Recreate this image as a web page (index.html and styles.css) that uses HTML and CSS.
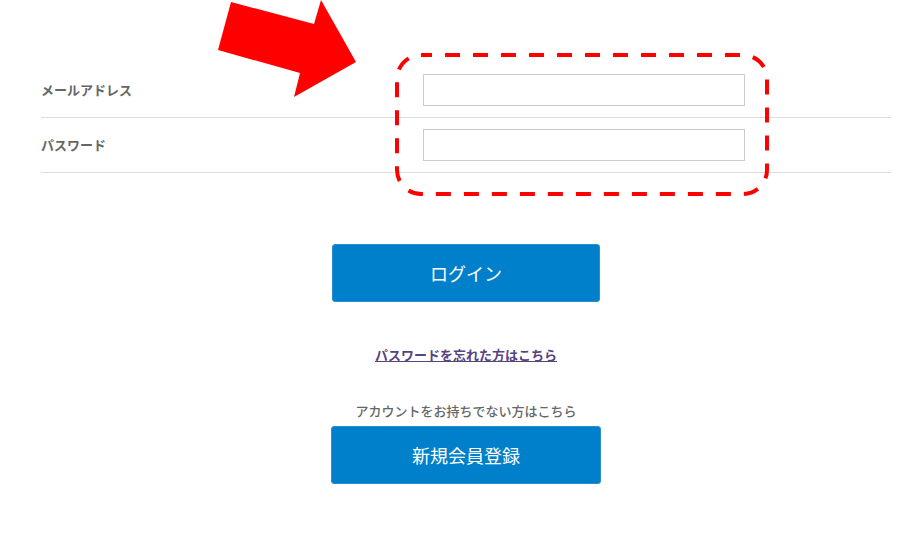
FILE: index.html
```html
<!DOCTYPE html>
<html lang="ja">
<head>
<meta charset="utf-8">
<link rel="stylesheet" href="styles.css">
</head>
<body>
<div class="page">
  <form class="login">
    <div class="rows">
      <div class="row">
        <label class="label">メールアドレス</label>
        <input class="field" type="text">
      </div>
      <div class="row">
        <label class="label">パスワード</label>
        <input class="field" type="password">
      </div>
    </div>
    <div class="actions">
      <button type="button" class="btn btn-login">ログイン</button>
      <a class="forgot" href="#">パスワードを忘れた方はこちら</a>
      <p class="note">アカウントをお持ちでない方はこちら</p>
      <button type="button" class="btn btn-register">新規会員登録</button>
    </div>
  </form>

  <svg class="arrow" width="140" height="100" viewBox="0 0 140 100">
    <polygon points="13,2 96,24 103,0 138,62 76,97 82,73 0,50" fill="#ff0000"/>
  </svg>
  <svg class="highlight" width="376" height="146" viewBox="0 0 376 146">
    <rect x="2" y="2" width="370" height="139" rx="24" ry="24" fill="none" stroke="#ff0000" stroke-width="4" stroke-dasharray="15 13" stroke-dashoffset="4"/>
  </svg>
</div>
</body>
</html>
```

FILE: styles.css
```css
* { box-sizing: border-box; }
html, body {
  margin: 0;
  padding: 0;
  background: #ffffff;
}
body {
  font-family: "Noto Sans CJK JP", "Noto Sans", sans-serif;
  color: #555555;
}
.page {
  position: relative;
  width: 912px;
  height: 533px;
  overflow: hidden;
}
.login {
  width: 850px;
  margin: 0 0 0 41px;
  padding-top: 63px;
}
.row {
  display: flex;
  align-items: center;
  height: 55px;
  border-bottom: 1px solid #dddddd;
}
.label {
  width: 382px;
  font-size: 13px;
  font-weight: 700;
  color: #666666;
  line-height: 1;
  padding-bottom: 2px;
}
.field {
  width: 322px;
  height: 32px;
  border: 1px solid #cccccc;
  background: #fff;
  margin: 0;
  padding: 0 8px;
}
.actions {
  display: flex;
  flex-direction: column;
  align-items: center;
  padding-top: 71px;
}
.btn {
  display: flex;
  align-items: center;
  justify-content: center;
  height: 58px;
  border: 1px solid #2a8fd0;
  border-radius: 3px;
  background: #0080cb;
  color: #ffffff;
  font-family: "Noto Sans CJK JP", sans-serif;
  font-size: 18px;
  font-weight: normal;
  padding: 0;
  margin: 0;
}
.btn-login { width: 268px; }
.btn-register { width: 270px; }
.forgot {
  margin-top: 44px;
  font-size: 13px;
  font-weight: 700;
  line-height: 18px;
  color: #56447e;
  text-decoration: underline;
}
.note {
  margin: 38px 0 6px;
  font-size: 13px;
  font-weight: 500;
  line-height: 18px;
  color: #666666;
}
.arrow {
  position: absolute;
  left: 218px;
  top: 0;
}
.highlight {
  position: absolute;
  left: 395px;
  top: 53px;
}
```
